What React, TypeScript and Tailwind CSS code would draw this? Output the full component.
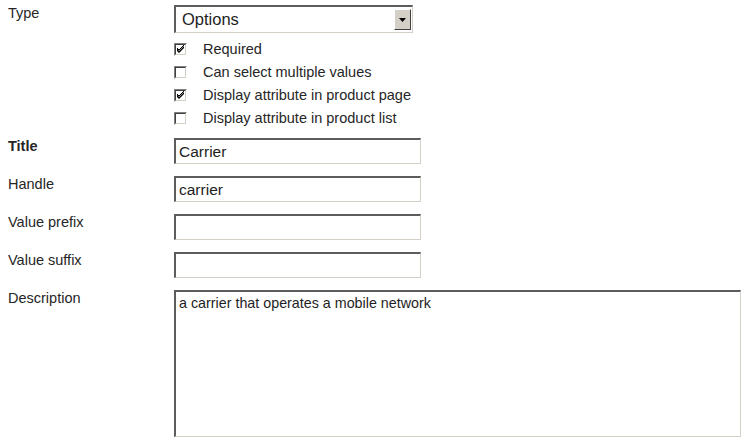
import React from "react";

const font = { fontFamily: '"Liberation Sans", Arial, sans-serif' };

function Check({ checked }: { checked?: boolean }) {
  return (
    <div className="w-[13px] h-[13px] bg-white border-t border-l border-[#808080] border-r border-b border-r-white border-b-white shrink-0">
      <div className="w-full h-full border-t border-l border-[#404040] border-r border-b border-r-[#d4d0c8] border-b-[#d4d0c8] flex items-center justify-center">
        {checked && (
          <svg width="9" height="9" viewBox="0 0 9 9">
            <path d="M1 3v3l2 2 5-5V1L3 6z" fill="#000" />
            <path d="M1 3l2 2 5-5" stroke="#000" strokeWidth="1" fill="none" />
          </svg>
        )}
      </div>
    </div>
  );
}

function Field({ value, w = "w-[247px]" }: { value?: string; w?: string }) {
  return (
    <div
      className={`${w} h-[26px] bg-white border-t-2 border-l-2 border-t-[#5c5c5c] border-l-[#5c5c5c] border-r border-b border-r-[#d4d0c8] border-b-[#d4d0c8] flex items-center pl-[3px] text-[15.5px] text-[#1e1e1e]`}
    >
      {value}
    </div>
  );
}

function Label({ children, bold }: { children: React.ReactNode; bold?: boolean }) {
  return (
    <div className={`w-[166px] shrink-0 text-[14.5px] leading-[17px] text-[#262626] ${bold ? "font-bold" : ""}`}>
      {children}
    </div>
  );
}

export default function App() {
  const opts: [string, boolean][] = [
    ["Required", true],
    ["Can select multiple values", false],
    ["Display attribute in product page", true],
    ["Display attribute in product list", false],
  ];
  return (
    <div className="w-[747px] h-[441px] bg-white pl-2 pt-[5px] overflow-hidden" style={font}>
      <div className="flex">
        <Label>Type</Label>
        <div className="flex flex-col">
          <div className="w-[239px] h-[28px] bg-white border-t-2 border-l-2 border-t-[#5c5c5c] border-l-[#5c5c5c] border-r border-b border-r-[#d4d0c8] border-b-[#d4d0c8] flex items-center justify-between pl-[6px] pr-[1px] text-[16.5px] text-[#1e1e1e]">
            <span>Options</span>
            <div className="w-[17px] h-[21px] bg-[#d4d0c8] border-t border-l border-white border-r border-b border-r-[#404040] border-b-[#404040] flex items-center justify-center">
              <svg width="7" height="4" viewBox="0 0 7 4">
                <path d="M0 0h7L3.5 4z" fill="#000" />
              </svg>
            </div>
          </div>
          <div className="flex flex-col mt-[5px]">
            {opts.map(([t, c]) => (
              <div key={t} className="h-[23px] flex items-center">
                <Check checked={c} />
                <span className="ml-4 text-[14.5px] text-[#262626]">{t}</span>
              </div>
            ))}
          </div>
        </div>
      </div>
      <div className="flex mt-[8px]">
        <Label bold>Title</Label>
        <Field value="Carrier" />
      </div>
      <div className="flex mt-[12px]">
        <Label>Handle</Label>
        <Field value="carrier" />
      </div>
      <div className="flex mt-[12px]">
        <Label>Value prefix</Label>
        <Field />
      </div>
      <div className="flex mt-[12px]">
        <Label>Value suffix</Label>
        <Field />
      </div>
      <div className="flex mt-[12px]">
        <Label>Description</Label>
        <div className="w-[567px] h-[147px] bg-white border-t-2 border-l-2 border-t-[#5c5c5c] border-l-[#5c5c5c] border-r border-b border-r-[#d4d0c8] border-b-[#d4d0c8] pl-[3px] pt-[3px] text-[14.3px] leading-[17px] text-[#1e1e1e]">
          a carrier that operates a mobile network
        </div>
      </div>
    </div>
  );
}
